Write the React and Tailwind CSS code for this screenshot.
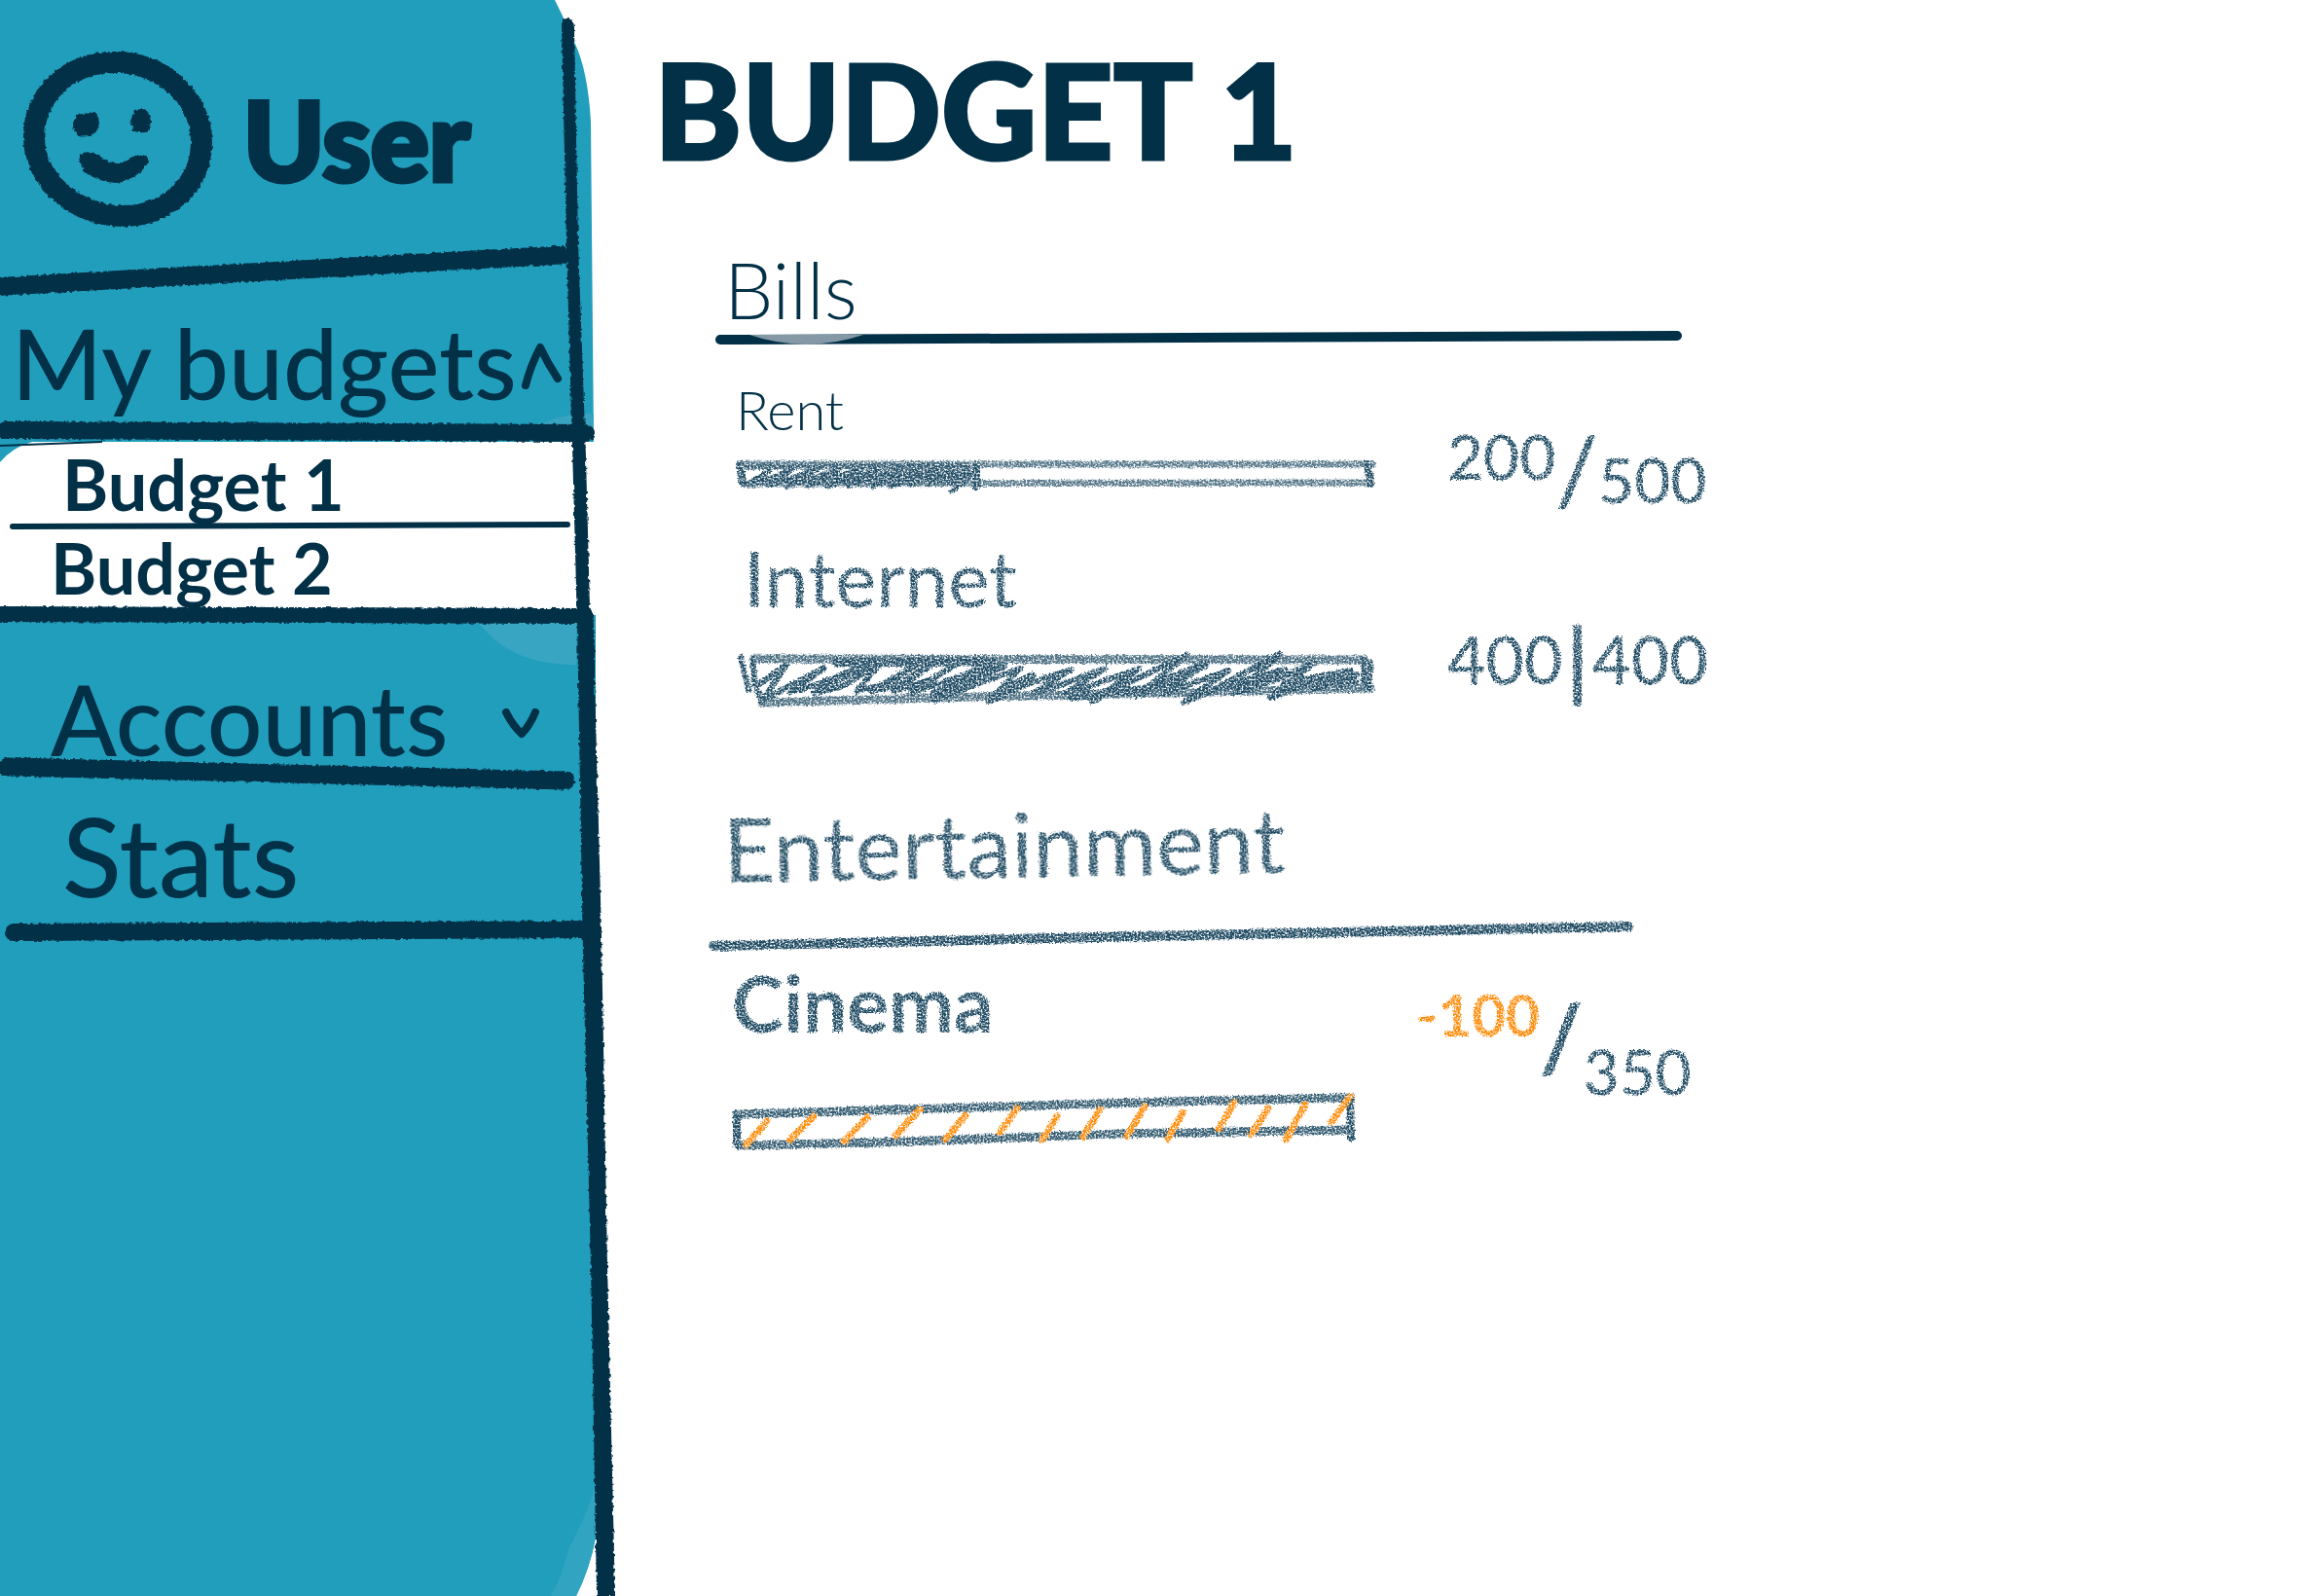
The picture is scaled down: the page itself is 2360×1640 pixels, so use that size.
const INK = "#023047";
const PENCIL = "#1f4b63";

function Filters() {
  return (
    <svg className="absolute h-0 w-0" aria-hidden="true">
      <defs>
        <filter id="pencil" x="-2%" y="-10%" width="104%" height="120%" colorInterpolationFilters="sRGB">
          <feTurbulence type="fractalNoise" baseFrequency="0.55" numOctaves="2" seed="4" result="noise" />
          <feDisplacementMap in="SourceGraphic" in2="noise" scale="5" xChannelSelector="R" yChannelSelector="G" result="rough" />
          <feColorMatrix in="noise" type="matrix" values="0 0 0 0 0  0 0 0 0 0  0 0 0 0 0  0 0 3.2 0 -0.8" result="grain" />
          <feComposite in="rough" in2="grain" operator="in" />
        </filter>
        <filter id="ink" x="-2%" y="-10%" width="104%" height="120%" colorInterpolationFilters="sRGB">
          <feTurbulence type="fractalNoise" baseFrequency="0.25" numOctaves="2" seed="7" result="noise" />
          <feDisplacementMap in="SourceGraphic" in2="noise" scale="4" xChannelSelector="R" yChannelSelector="G" />
        </filter>
      </defs>
    </svg>
  );
}

function SidebarBackdrop() {
  return (
    <svg className="absolute inset-0 h-full w-full" viewBox="0 0 632 1640" preserveAspectRatio="none" aria-hidden="true">
      <path d="M0 0H570Q582 24 590 43Q604 72 607 125L610 454H33Q12 460 0 475Z" fill="#219ebc" />
      <path d="M0 632H612V1580Q606 1612 592 1640H0Z" fill="#219ebc" />
      <path d="M553 437Q578 424 610 425V440H553Z" fill="#37a3c0" />
      <path d="M492 640Q525 684 592 683V640Z" fill="#38a6c3" />
      <path d="M612 1525Q604 1555 584 1592Q578 1618 566 1640H592Q606 1612 612 1580Z" fill="#30a4c1" />
      <g fill={INK} className="[filter:url(#ink)]">
        <path d="M577 25Q578 17 584 18Q590 19 590 30L594 250L602 470L606 625Q612 632 611 700L618 960L624 1300L632 1640H613L607 1300L599 980L593 640L588 460L582 250Z" />
      </g>
      <path d="M0 458L105 454" stroke={INK} strokeWidth="2" />
    </svg>
  );
}

function Rule({ viewBox, d, width, className }) {
  return (
    <svg className={"relative block w-full overflow-visible " + className} viewBox={viewBox} preserveAspectRatio="none" aria-hidden="true">
      <path d={d} fill="none" stroke={INK} strokeWidth={width} strokeLinecap="round" />
    </svg>
  );
}

function Smiley() {
  return (
    <svg className="h-[180px] w-[194px] shrink-0 overflow-visible [filter:url(#ink)]" viewBox="23 53 194 180" role="img" aria-label="User avatar">
      <path d="M115 64C160 62 206 97 206 146C206 190 170 222 125 222C78 222 34 186 34 141C34 98 68 65 115 64Z" fill="none" stroke={INK} strokeWidth="22" />
      <path d="M77 118L96 115Q101 118 101 128L97 137Q88 142 80 140Q74 136 74 127Z" fill={INK} />
      <path d="M137 113Q148 110 152 116L155 124L151 135Q144 138 136 134L133 124Z" fill={INK} />
      <path d="M81 158Q90 154 99 159Q109 167 119 168Q128 167 136 161Q144 156 151 162Q152 168 147 173Q134 187 118 188Q100 187 86 177Q80 168 81 158Z" fill={INK} />
    </svg>
  );
}

function Sidebar() {
  return (
    <aside className="relative min-h-screen w-[632px] shrink-0 text-[#023047]">
      <SidebarBackdrop />
      <div className="relative flex items-center gap-8 pt-[53px] pb-[18px] pl-6">
        <Smiley />
        <span className="text-[112px] leading-[120px] font-black [-webkit-text-stroke:5px_#023047]">User</span>
      </div>
      <nav>
        <Rule viewBox="0 0 632 53" className="h-[53px] [filter:url(#ink)]" d="M-12 44L576 11" width="19" />
        <button type="button" aria-expanded="true" className="relative flex w-full items-center pt-2 pl-3">
          <span className="text-[100px] leading-[120px] font-medium">My budgets</span>
          <svg className="mt-2 ml-1 h-12 w-11 shrink-0" viewBox="0 0 44 48" aria-hidden="true">
            <path d="M5 44Q10 24 20 5Q28 22 38 37" fill="none" stroke={INK} strokeWidth="8" strokeLinecap="round" strokeLinejoin="round" />
          </svg>
        </button>
        <Rule viewBox="0 0 632 22" className="h-[22px] [filter:url(#ink)]" d="M6 10L602 13" width="18" />
        <ul className="relative">
          <li>
            <a href="#budget-1" className="block pt-[3px] pl-16 text-[72px] leading-[80px] font-bold">Budget 1</a>
          </li>
          <li>
            <Rule viewBox="0 0 632 6" className="h-[6px]" d="M13 4L583 2" width="6" />
            <a href="#budget-2" className="block pl-13 text-[72px] leading-[80px] font-bold">Budget 2</a>
          </li>
        </ul>
        <Rule viewBox="0 0 632 17" className="h-[17px] [filter:url(#ink)]" d="M-10 8L602 10" width="16" />
        <button type="button" aria-expanded="false" className="relative flex w-full items-center pt-[58px] pl-13">
          <span className="w-[464px] text-left text-[100px] leading-[80px] font-medium">Accounts</span>
          <svg className="mt-3 h-8 w-10 shrink-0" viewBox="0 0 40 32" aria-hidden="true">
            <path d="M4 4Q11 18 20 26Q28 18 34 4" fill="none" stroke={INK} strokeWidth="8" strokeLinecap="round" strokeLinejoin="round" />
          </svg>
        </button>
        <Rule viewBox="0 0 632 33" className="h-[33px] [filter:url(#ink)]" d="M8 10L581 24" width="19" />
        <a href="#stats" className="relative block pt-2 pb-[6px] pl-16 text-[112px] leading-[120px] font-medium">Stats</a>
        <Rule viewBox="0 0 632 22" className="h-[22px] [filter:url(#ink)]" d="M14 13L608 10" width="18" />
      </nav>
    </aside>
  );
}

function Bar({ label, value, max, viewBox, className, children }) {
  return (
    <div role="progressbar" aria-label={label} aria-valuenow={value} aria-valuemin={0} aria-valuemax={max} className={className}>
      <svg className="block h-full w-full overflow-visible [filter:url(#pencil)]" viewBox={viewBox} preserveAspectRatio="none" fill="none" stroke={PENCIL} strokeLinecap="round" strokeLinejoin="round" aria-hidden="true">
        {children}
      </svg>
    </div>
  );
}

function RentBar() {
  return (
    <Bar label="Rent" value={200} max={500} viewBox="756 468 660 40" className="mt-[13px] h-10">
      <path d="M761 477H1410M764 497L1408 496" strokeWidth="7" strokeOpacity="0.75" />
      <path d="M760 477L763 495M1405 477L1408 497M1003 480V500" strokeWidth="8" />
      <path d="M765 499L790 484L775 498L815 482L790 499L840 482L808 500L862 483L830 499L885 482L850 500L902 482L872 499L925 482L896 500L945 482L915 500L962 482L935 498L980 482L955 497L995 484L975 497L998 488L978 505" strokeWidth="5" />
      <path d="M790 494L880 488L990 486L850 496L985 492L900 480L995 481M767 480L990 479" strokeWidth="6" strokeOpacity="0.8" />
    </Bar>
  );
}

function InternetBar() {
  return (
    <Bar label="Internet" value={400} max={400} viewBox="756 668 660 65" className="mt-[30px] h-[65px]">
      <path d="M774 678L1402 679M783 723L1000 717L1200 713L1408 708" strokeWidth="9" strokeOpacity="0.8" />
      <path d="M773 678L776 705L783 722M761 676L769 710M1401 679V706M1408 681L1406 708" strokeWidth="6" />
      <path d="M780 704L808 684L784 720L846 688L812 712L840 704L892 684L836 713L866 706L905 682L880 711L912 704L945 682L895 711L920 706L960 682L918 711L955 700L985 682L935 713L990 695L1015 683L960 721L1000 705L1048 688L1016 722L1050 706L1100 689L1062 713L1086 706L1135 688L1095 713L1120 706L1170 688L1122 722L1160 702L1220 674L1168 716L1200 704L1240 682L1195 714L1262 690L1216 723L1250 708L1315 673L1270 713L1310 700L1350 682L1305 718L1345 704L1388 690L1350 709L1394 694L1375 707" strokeWidth="6" />
      <path d="M960 714L1030 685L970 710M1020 717L1060 696L1028 712M1180 708L1238 684M1262 706L1320 690L1290 706M1320 704L1385 692L1350 700L1392 701M1100 717L1180 709M860 682L1020 681" strokeWidth="9" />
    </Bar>
  );
}

function CinemaBar() {
  return (
    <Bar label="Cinema" value={-100} max={350} viewBox="752 1120 660 65" className="mt-[41px] h-[65px]">
      <path d="M757 1146L1000 1139L1200 1133L1388 1129M760 1178L900 1175L1150 1166L1388 1162" strokeWidth="9" strokeOpacity="0.9" />
      <path d="M757 1146V1177M1387 1129L1388 1170" strokeWidth="8" />
      <g stroke="#ff8c0a" strokeWidth="7">
        <path d="M788 1153L767 1177M836 1148L812 1172M891 1149L867 1174M945 1141L920 1168M992 1147L972 1171M1045 1140L1027 1165M1086 1148L1071 1172M1130 1141L1113 1169M1176 1138L1158 1168M1215 1144L1200 1171M1268 1134L1252 1161M1303 1140L1286 1166M1341 1136L1321 1172M1387 1128L1368 1154" />
      </g>
    </Bar>
  );
}

const amountRow = "flex items-start leading-[80px] font-medium [filter:url(#pencil)]";

export default function App() {
  return (
    <div className="flex min-h-screen overflow-hidden bg-white font-['Lato',sans-serif]">
      <Filters />
      <Sidebar />
      <main className="min-w-0 flex-1 pt-8 pl-10">
        <h1 className="text-[136px] leading-[160px] font-black text-[#023047] [-webkit-text-stroke:3px_#023047]">BUDGET 1</h1>

        <section className="mt-[58px] ml-16 max-w-[1060px]">
          <h2 className="pt-[3px] pl-2 text-[80px] leading-[88px] font-light text-[#023047]">Bills</h2>
          <svg className="block h-3 w-full max-w-[992px] overflow-visible" viewBox="0 0 992 12" preserveAspectRatio="none" aria-hidden="true">
            <path d="M4 8L987 4" stroke={INK} strokeWidth="10" strokeLinecap="round" />
            <path d="M34 3Q60 12 92 13Q125 12 151 3Z" fill="#8499a5" />
          </svg>

          <div className="mt-[34px] grid grid-cols-[minmax(0,660px)_auto] justify-start gap-x-[71px] pl-5">
            <div>
              <h3 className="text-[56px] leading-[68px] font-light text-[#023047]">Rent</h3>
              <RentBar />
            </div>
            <p className={amountRow + " pt-[42px] text-[64px] text-[#1f4b63]"}>
              <span>200</span>
              <span className="pt-3 text-[96px]">/</span>
              <span className="pt-6">500</span>
            </p>
          </div>

          <div className="mt-4 grid grid-cols-[minmax(0,660px)_auto] justify-start gap-x-[71px] pl-5">
            <div>
              <h3 className="pl-2 text-[80px] leading-[88px] text-[#1f4b63] [filter:url(#pencil)]">Internet</h3>
              <InternetBar />
            </div>
            <p className={amountRow + " pt-[88px] text-[68px] text-[#1f4b63]"}>
              <span>400</span>
              <span className="px-1 text-[88px] font-bold">|</span>
              <span>400</span>
            </p>
          </div>
        </section>

        <section className="mt-[84px] ml-16 max-w-[1060px] text-[#1f4b63]">
          <h2 className="origin-bottom-left -rotate-1 pl-2 text-[92px] leading-[112px] [filter:url(#pencil)]">Entertainment</h2>
          <svg className="mt-4 -ml-2 block h-[35px] w-full max-w-[950px] overflow-visible [filter:url(#pencil)]" viewBox="0 0 950 35" preserveAspectRatio="none" aria-hidden="true">
            <path d="M5 28L400 19L945 8" fill="none" stroke={PENCIL} strokeWidth="10" strokeLinecap="round" />
          </svg>

          <div className="mt-[3px] grid grid-cols-[minmax(0,660px)_auto] justify-start gap-x-[43px] pl-4">
            <div>
              <h3 className="text-[80px] leading-[96px] font-bold [filter:url(#pencil)]">Cinema</h3>
              <CinemaBar />
            </div>
            <p className={amountRow + " text-[64px]"}>
              <span className="pt-5 text-[60px] font-bold text-[#ff8c0a]">-100</span>
              <span className="pt-[42px] text-[96px] font-bold">/</span>
              <span className="pt-[79px]">350</span>
            </p>
          </div>
        </section>
      </main>
    </div>
  );
}
